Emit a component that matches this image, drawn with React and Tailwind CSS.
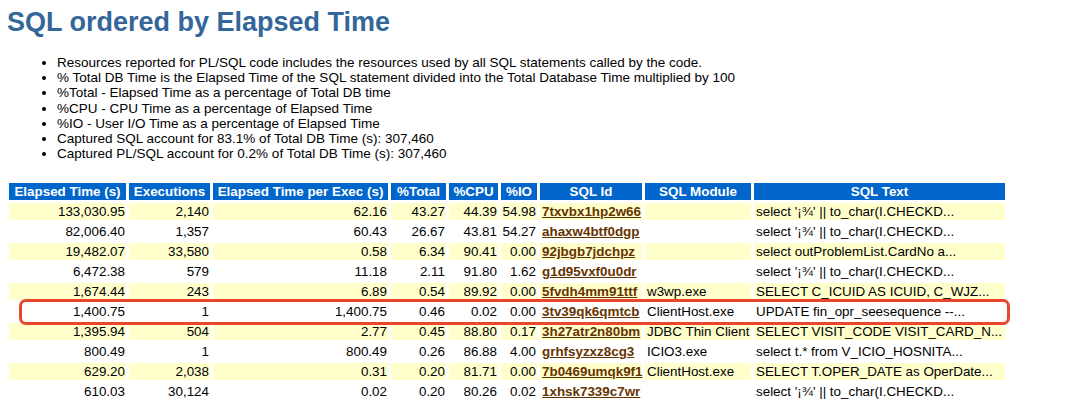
const notes = [
  "Resources reported for PL/SQL code includes the resources used by all SQL statements called by the code.",
  "% Total DB Time is the Elapsed Time of the SQL statement divided into the Total Database Time multiplied by 100",
  "%Total - Elapsed Time as a percentage of Total DB time",
  "%CPU - CPU Time as a percentage of Elapsed Time",
  "%IO - User I/O Time as a percentage of Elapsed Time",
  "Captured SQL account for 83.1% of Total DB Time (s): 307,460",
  "Captured PL/SQL account for 0.2% of Total DB Time (s): 307,460",
];

const headers = [
  { label: "Elapsed Time (s)", w: "w-[117px]" },
  { label: "Executions", w: "w-[81px]" },
  { label: "Elapsed Time per Exec (s)", w: "w-[175px]" },
  { label: "%Total", w: "w-[55px]" },
  { label: "%CPU", w: "w-[49px]" },
  { label: "%IO", w: "w-[36px]" },
  { label: "SQL Id", w: "w-[102px]" },
  { label: "SQL Module", w: "w-[106px]" },
  { label: "SQL Text", w: "w-[251px]" },
];

const rows = [
  ["133,030.95", "2,140", "62.16", "43.27", "44.39", "54.98", "7txvbx1hp2w66", "", "select '¡¾' || to_char(I.CHECKD..."],
  ["82,006.40", "1,357", "60.43", "26.67", "43.81", "54.27", "ahaxw4btf0dgp", "", "select '¡¾' || to_char(I.CHECKD..."],
  ["19,482.07", "33,580", "0.58", "6.34", "90.41", "0.00", "92jbgb7jdchpz", "", "select outProblemList.CardNo a..."],
  ["6,472.38", "579", "11.18", "2.11", "91.80", "1.62", "g1d95vxf0u0dr", "", "select '¡¾' || to_char(I.CHECKD..."],
  ["1,674.44", "243", "6.89", "0.54", "89.92", "0.00", "5fvdh4mm91ttf", "w3wp.exe", "SELECT C_ICUID AS ICUID, C_WJZ..."],
  ["1,400.75", "1", "1,400.75", "0.46", "0.02", "0.00", "3tv39qk6qmtcb", "ClientHost.exe", "UPDATE fin_opr_seesequence --..."],
  ["1,395.94", "504", "2.77", "0.45", "88.80", "0.17", "3h27atr2n80bm", "JDBC Thin Client", "SELECT VISIT_CODE VISIT_CARD_N..."],
  ["800.49", "1", "800.49", "0.26", "86.88", "4.00", "grhfsyzxz8cg3", "ICIO3.exe", "select t.* from V_ICIO_HOSNITA..."],
  ["629.20", "2,038", "0.31", "0.20", "81.71", "0.00", "7b0469umqk9f1", "ClientHost.exe", "SELECT T.OPER_DATE as OperDate..."],
  ["610.03", "30,124", "0.02", "0.20", "80.26", "0.02", "1xhsk7339c7wr", "", "select '¡¾' || to_char(I.CHECKD..."],
];

export default function App() {
  return (
    <div className="relative w-[1080px] h-[417px] overflow-hidden bg-white font-['Liberation_Sans',Arial,sans-serif] text-black">
      {/* Title */}
      <h1 className="pt-[6px] pl-[7px] text-[27px] leading-[32px] font-bold text-[#336699]">
        SQL ordered by Elapsed Time
      </h1>

      {/* Notes */}
      <ul className="mt-[17px] pl-[57px] list-disc text-[13.5px] leading-[15.2px]">
        {notes.map((n) => (
          <li key={n}>{n}</li>
        ))}
      </ul>

      {/* Table */}
      <table className="mt-[19px] ml-[6px] w-[1002px] table-fixed border-separate border-spacing-[3px] text-[13.4px] leading-[17px]">
        <thead>
          <tr>
            {headers.map((h) => (
              <th key={h.label} className={`${h.w} h-[17px] px-0 bg-[#0066cc] text-white font-bold text-center whitespace-nowrap overflow-hidden`}>
                {h.label}
              </th>
            ))}
          </tr>
        </thead>
        <tbody>
          {rows.map((r, i) => {
            const bg = i % 2 === 0 ? "bg-[#ffffcc]" : "bg-white";
            return (
              <tr key={r[6]}>
                {r.slice(0, 6).map((c, j) => (
                  <td key={j} className={`${bg} h-[17px] px-[1px] text-right whitespace-nowrap`}>{c}</td>
                ))}
                <td className={`${bg} px-[2px] whitespace-nowrap`}>
                  <a href="#" className="font-bold text-[#663300] underline">{r[6]}</a>
                </td>
                <td className={`${bg} px-[2px] whitespace-nowrap overflow-hidden`}>{r[7]}</td>
                <td className={`${bg} px-[2px] whitespace-nowrap overflow-hidden`}>{r[8]}</td>
              </tr>
            );
          })}
        </tbody>
      </table>

      {/* Highlight annotation */}
      <div className="absolute left-[19px] top-[299px] w-[991px] h-[26px] border-[3px] border-[#e8472d] rounded-[7px] pointer-events-none" />
    </div>
  );
}
